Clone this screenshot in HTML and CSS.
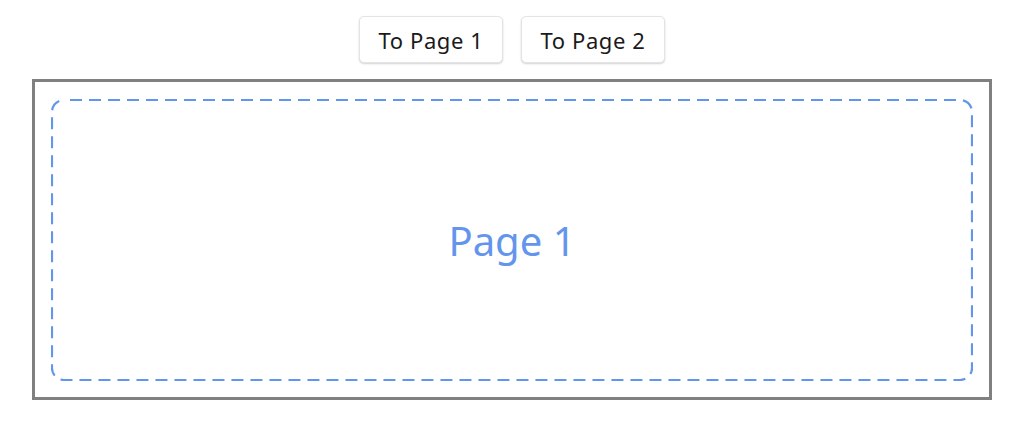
FILE: index.html
```html
<!DOCTYPE html>
<html>
<head>
<meta charset="utf-8">
<link rel="stylesheet" href="styles.css">
</head>
<body>
<div class="app">
  <div class="nav">
    <button class="btn">To Page 1</button>
    <button class="btn">To Page 2</button>
  </div>
  <div class="frame">
    <div class="page">
      <svg class="dash" width="922" height="282" viewBox="0 0 922 282" aria-hidden="true">
        <rect x="1" y="1" width="920" height="280" rx="12" ry="12" fill="none" stroke="#6495ed" stroke-width="2.2" stroke-dasharray="12 7" stroke-dashoffset="-6"/>
      </svg>
      <span class="label">Page 1</span>
    </div>
  </div>
</div>
</body>
</html>
```
FILE: styles.css
```css
html, body {
  margin: 0;
  padding: 0;
  background: #ffffff;
}
body {
  font-family: "Noto Sans", "Open Sans", sans-serif;
}
.app {
  display: flex;
  flex-direction: column;
  align-items: center;
  padding-top: 16px;
}
.nav {
  display: flex;
  gap: 18px;
  margin-bottom: 16px;
}
.btn {
  width: 144px;
  height: 47px;
  background: #ffffff;
  border: 1px solid #e4e4e4;
  border-radius: 5px;
  box-shadow: 0 1px 2px rgba(0,0,0,0.18);
  font-family: "Noto Sans", "Open Sans", sans-serif;
  font-size: 22px;
  letter-spacing: 0.6px;
  color: #1a1a1a;
  padding: 0;
}
.frame {
  box-sizing: border-box;
  width: 960px;
  height: 321px;
  border: 3px solid #808080;
  padding: 17px 16px 16px 16px;
  display: flex;
}
.page {
  position: relative;
  flex: 1;
  display: flex;
  align-items: center;
  justify-content: center;
  color: #6495ed;
  font-size: 40px;
}
.dash {
  position: absolute;
  left: 0;
  top: 0;
}
.label {
  position: relative;
}
```
